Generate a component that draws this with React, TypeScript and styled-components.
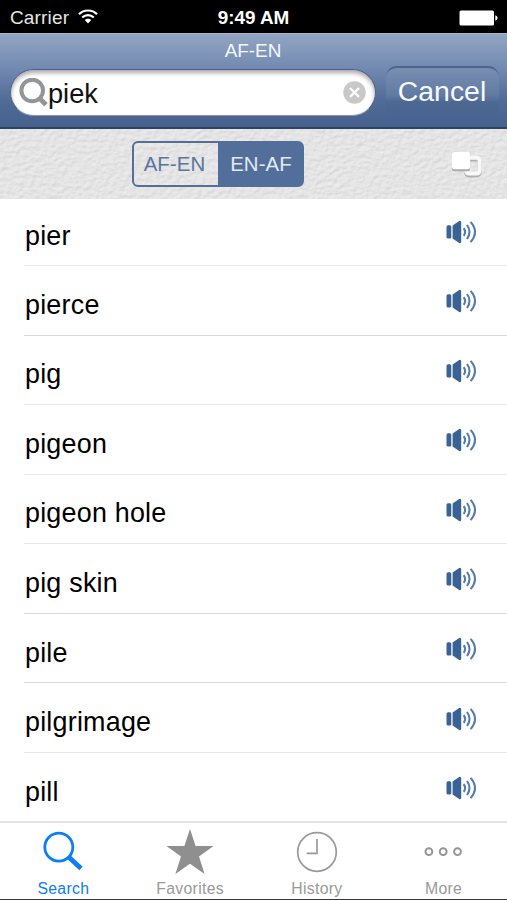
import React, { useState } from 'react'
import styled, { createGlobalStyle } from 'styled-components'

const words = ['pier', 'pierce', 'pig', 'pigeon', 'pigeon hole', 'pig skin', 'pile', 'pilgrimage', 'pill']

const App: React.FC = () => {
  const [query, setQuery] = useState('piek')
  const [direction, setDirection] = useState('EN-AF')
  const [tab, setTab] = useState('Search')

  return (
    <Screen>
      <GlobalStyle />
      <StatusBar>
        <Carrier>
          Carrier
          <WifiIcon />
        </Carrier>
        <Time>9:49 AM</Time>
        <BatteryIcon />
      </StatusBar>

      <Header>
        <Title>AF-EN</Title>
        <SearchRow>
          <SearchField>
            <FieldIcon />
            <input aria-label="Search" value={query} onChange={(e) => setQuery(e.target.value)} />
            <ClearButton aria-label="Clear" onClick={() => setQuery('')}>
              <ClearIcon />
            </ClearButton>
          </SearchField>
          <CancelButton onClick={() => setQuery('')}>Cancel</CancelButton>
        </SearchRow>
      </Header>

      <Toolbar>
        <LeatherTexture />
        <Segments>
          {['AF-EN', 'EN-AF'].map((item) => (
            <Segment key={item} $active={direction === item} onClick={() => setDirection(item)}>
              {item}
            </Segment>
          ))}
        </Segments>
        <CardsButton aria-label="Cards">
          <CardsIcon />
        </CardsButton>
      </Toolbar>

      <WordList>
        {words.map((word) => (
          <WordRow key={word}>
            <Word>{word}</Word>
            <SpeakerIcon />
          </WordRow>
        ))}
      </WordList>

      <TabBar>
        {tabs.map(({ name, Icon }) => (
          <Tab key={name} $active={tab === name} onClick={() => setTab(name)}>
            <Icon />
            <span>{name}</span>
          </Tab>
        ))}
      </TabBar>
    </Screen>
  )
}

/** icons */
const WifiIcon = () => (
  <svg width="20" height="15" viewBox="0 0 20 15" fill="none" stroke="#fff" strokeWidth="2.1">
    <path d="M1 5.2A12.8 12.8 0 0 1 19 5.2" />
    <path d="M4.2 8.5A8.2 8.2 0 0 1 15.8 8.5" />
    <path d="M6.8 11.1A4.6 4.6 0 0 1 13.2 11.1L10 14.4Z" fill="#fff" stroke="none" />
  </svg>
)

const BatteryIcon = () => (
  <svg width="39" height="16" viewBox="0 0 39 16" fill="#fff">
    <rect x="0.5" y="0.5" width="34.5" height="15" rx="1.5" />
    <path d="M36.3 5.2Q38.6 6 38.6 8T36.3 10.8Z" />
  </svg>
)

const FieldIcon = () => (
  <svg width="29" height="29" viewBox="0 0 29 29" fill="none" stroke="#939699">
    <circle cx="13.2" cy="12.5" r="10.8" strokeWidth="4" />
    <path d="M20.4 20.2L27 26.7" strokeWidth="4.8" />
  </svg>
)

const ClearIcon = () => (
  <svg width="23" height="23" viewBox="0 0 23 23">
    <circle cx="11.5" cy="11.5" r="11.2" fill="#c8c8c8" />
    <path d="M7 7L16 16M16 7L7 16" stroke="#fff" strokeWidth="2.3" />
  </svg>
)

const CardsIcon = () => (
  <svg width="34" height="31" viewBox="0 0 34 31">
    <rect x="16" y="9.6" width="13.6" height="15.8" rx="3" fill="none" stroke="#b0b0b0" strokeWidth="4" />
    <rect x="16" y="7.8" width="13.6" height="15.8" rx="3" fill="none" stroke="#f8f8f8" strokeWidth="4" />
    <rect x="2" y="4.2" width="18" height="17" rx="2.5" fill="#aaa" />
    <rect x="2" y="2" width="18" height="17.3" rx="2.5" fill="#fff" />
  </svg>
)

const SpeakerIcon = () => (
  <svg width="31" height="24" viewBox="0 0 31 24" fill="#396394">
    <rect x="0.5" y="5.2" width="4.8" height="13.4" rx="1.6" />
    <path d="M6.6 5.5L13.2 1Q15.2 0.2 15.2 2.4V21.6Q15.2 23.8 13.2 23L6.6 18.5Z" />
    <g fill="none" stroke="#557cae" strokeWidth="2.1">
      <path d="M17.7 8.1Q20.5 12 17.7 15.9" />
      <path d="M21 5Q26 12 21 19" />
      <path d="M24.6 1.9Q33.4 12 24.6 22.1" />
    </g>
  </svg>
)

const SearchIcon = () => (
  <svg width="44" height="44" viewBox="0 0 44 44" fill="none" stroke="currentColor">
    <circle cx="17.8" cy="17.2" r="14" strokeWidth="2.8" />
    <path d="M27.5 26.7L40 38.5" strokeWidth="4.8" />
  </svg>
)

const StarIcon = () => (
  <svg width="48" height="48" viewBox="0 0 48 48" fill="#8f8f8f">
    <path d="M24 1L29.6 18H47.6L33 28.6L38.6 46L24 35.7L9.4 46L15 28.6L0.4 18H18.4Z" />
  </svg>
)

const ClockIcon = () => (
  <svg width="44" height="44" viewBox="0 0 44 44" fill="none" stroke="#999" strokeWidth="1.7">
    <circle cx="22" cy="22" r="19.3" />
    <path d="M22 9V23.3H11.7" />
  </svg>
)

const MoreIcon = () => (
  <svg width="44" height="44" viewBox="0 0 44 44" fill="none" stroke="#949494" strokeWidth="1.9">
    <circle cx="6.9" cy="21.7" r="3.4" />
    <circle cx="21.2" cy="21.7" r="3.4" />
    <circle cx="35.5" cy="21.7" r="3.4" />
  </svg>
)

const tabs = [
  { name: 'Search', Icon: SearchIcon },
  { name: 'Favorites', Icon: StarIcon },
  { name: 'History', Icon: ClockIcon },
  { name: 'More', Icon: MoreIcon },
]

/** embossed grain behind the toolbar controls */
const LeatherTexture = () => (
  <Texture aria-hidden="true">
    <filter id="leather" x="0" y="0" width="100%" height="100%" colorInterpolationFilters="sRGB">
      <feTurbulence type="fractalNoise" baseFrequency="0.18 0.25" numOctaves="2" seed="8" />
      <feDiffuseLighting surfaceScale="0.9" diffuseConstant="1.04" lightingColor="#f0f0f0">
        <feDistantLight azimuth="235" elevation="62" />
      </feDiffuseLighting>
    </filter>
    <rect width="100%" height="100%" filter="url(#leather)" opacity="0.3" />
  </Texture>
)

const GlobalStyle = createGlobalStyle`
  * {
    box-sizing: border-box;
  }
  body {
    margin: 0;
    font-family: 'Liberation Sans', Arial, sans-serif;
  }
  button,
  input {
    padding: 0;
    border: 0;
    background: none;
    font-family: inherit;
  }
  svg {
    display: block;
    flex: none;
  }
`

const Screen = styled.div`
  display: flex;
  flex-direction: column;

  width: 507px;
  height: 900px;
  overflow: hidden;

  background: #fff;
`

const StatusBar = styled.div`
  display: grid;
  grid-template-columns: 1fr auto 1fr;
  align-items: center;

  height: 33px;
  padding: 3px 9px 0 10px;

  background: #000;
  color: #fff;
  font-size: 19px;

  > svg {
    justify-self: end;
  }
`

const Carrier = styled.div`
  display: flex;
  align-items: center;
  gap: 9px;

  color: #e6e6e6;
  letter-spacing: 0.15px;

  svg {
    margin-top: -4px;
  }
`

const Time = styled.div`
  margin-right: 1px;

  font-size: 18.9px;
  font-weight: bold;
`

const Header = styled.header`
  height: 96px;
  padding: 6px 8px 0 10px;

  background: linear-gradient(#93a5c3, #7189b0 38%, #506b96 72%, #46618d);
  border-top: 1px solid #a9b5cb;
  border-bottom: 2px solid #2e4364;
`

const Title = styled.div`
  padding-right: 3px;

  color: #f4f7fc;
  font-size: 18.9px;
  line-height: 21px;
  text-align: center;
`

const SearchRow = styled.div`
  display: flex;
  gap: 10px;

  margin-top: 6px;
`

const SearchField = styled.div`
  display: flex;
  align-items: center;

  width: 366px;
  height: 47px;
  margin-top: 2px;
  padding: 0 9px 0 8px;

  background: #fff;
  border: 1px solid #4d6186;
  border-bottom-color: #8697b5;
  border-radius: 24px;
  box-shadow: inset 0 3px 4px rgba(50, 40, 45, 0.4);

  input {
    flex: 1;
    min-width: 0;
    height: 36px;
    padding: 3px 0 0;

    color: #111;
    font-size: 27.2px;
    outline: none;
  }
`

const ClearButton = styled.button`
  display: flex;
  margin-top: -1px;
`

const CancelButton = styled.button`
  width: 115px;
  height: 52px;
  margin-top: -1px;
  padding: 0 1px 3px 0;

  background: linear-gradient(#798fb2, #607aa4 55%, #4d6893 68%, #49648f);
  border-top: 2px solid #4e648a;
  border-radius: 11px;
  color: #f7f9fd;
  font-size: 28.4px;
`

const Toolbar = styled.div`
  position: relative;

  display: grid;
  grid-template-columns: 132px 172px 1fr;
  align-items: center;

  height: 70px;

  background: #e9e9e9;
`

const Texture = styled.svg`
  position: absolute;
  inset: 0;

  width: 100%;
  height: 100%;
`

const Segments = styled.div`
  position: relative;
  grid-column: 2;

  display: grid;
  grid-template-columns: 1fr 1fr;

  height: 46px;

  border: 2px solid #526f9b;
  border-radius: 6px;
`

const Segment = styled.button<{ $active: boolean }>`
  padding: 1px 0 0;

  background: ${({ $active }) => ($active ? '#526f9b' : 'transparent')};
  color: ${({ $active }) => ($active ? '#e4e9f2' : '#5a759f')};
  font-size: 20.4px;
  letter-spacing: 0.1px;

  &:first-child {
    padding-right: 3px;
  }
  &:last-child {
    padding-left: 2px;
  }
`

const CardsButton = styled.button`
  position: relative;
  justify-self: end;
  margin: 2px 23px 0 0;
`

const WordList = styled.ul`
  flex: 1;

  margin: -3px 0 0;
  padding: 3px 0 0;
  overflow: hidden;

  list-style: none;
`

const WordRow = styled.li`
  display: flex;
  align-items: center;
  justify-content: space-between;

  height: 69.56px;
  margin-left: 24px;
  padding: 2px 30px 0 0;

  border-bottom: 1.5px solid #e8e8e8;

  &:first-child {
    height: 67px;
    padding-top: 0;
  }
  &:nth-child(4n + 2),
  &:nth-child(7) {
    border-color: #d9d9d9;
  }
`

const Word = styled.span`
  padding: 8px 0 0 1px;

  color: #000;
  font-size: 26.9px;
  letter-spacing: 0.22px;
`

const TabBar = styled.nav`
  display: grid;
  grid-template-columns: repeat(4, 1fr);

  height: 79px;

  border-top: 2px solid #e5e5e5;
  border-bottom: 1px solid #39393b;
`

const Tab = styled.button<{ $active: boolean }>`
  display: flex;
  flex-direction: column;
  align-items: center;
  justify-content: space-between;

  padding: 5px 0 2px;

  color: ${({ $active }) => ($active ? '#0b7df5' : '#999')};
  font-size: 15.8px;
  line-height: 17px;
  letter-spacing: 0.3px;

  svg {
    height: 48px;
  }
`

export default App
